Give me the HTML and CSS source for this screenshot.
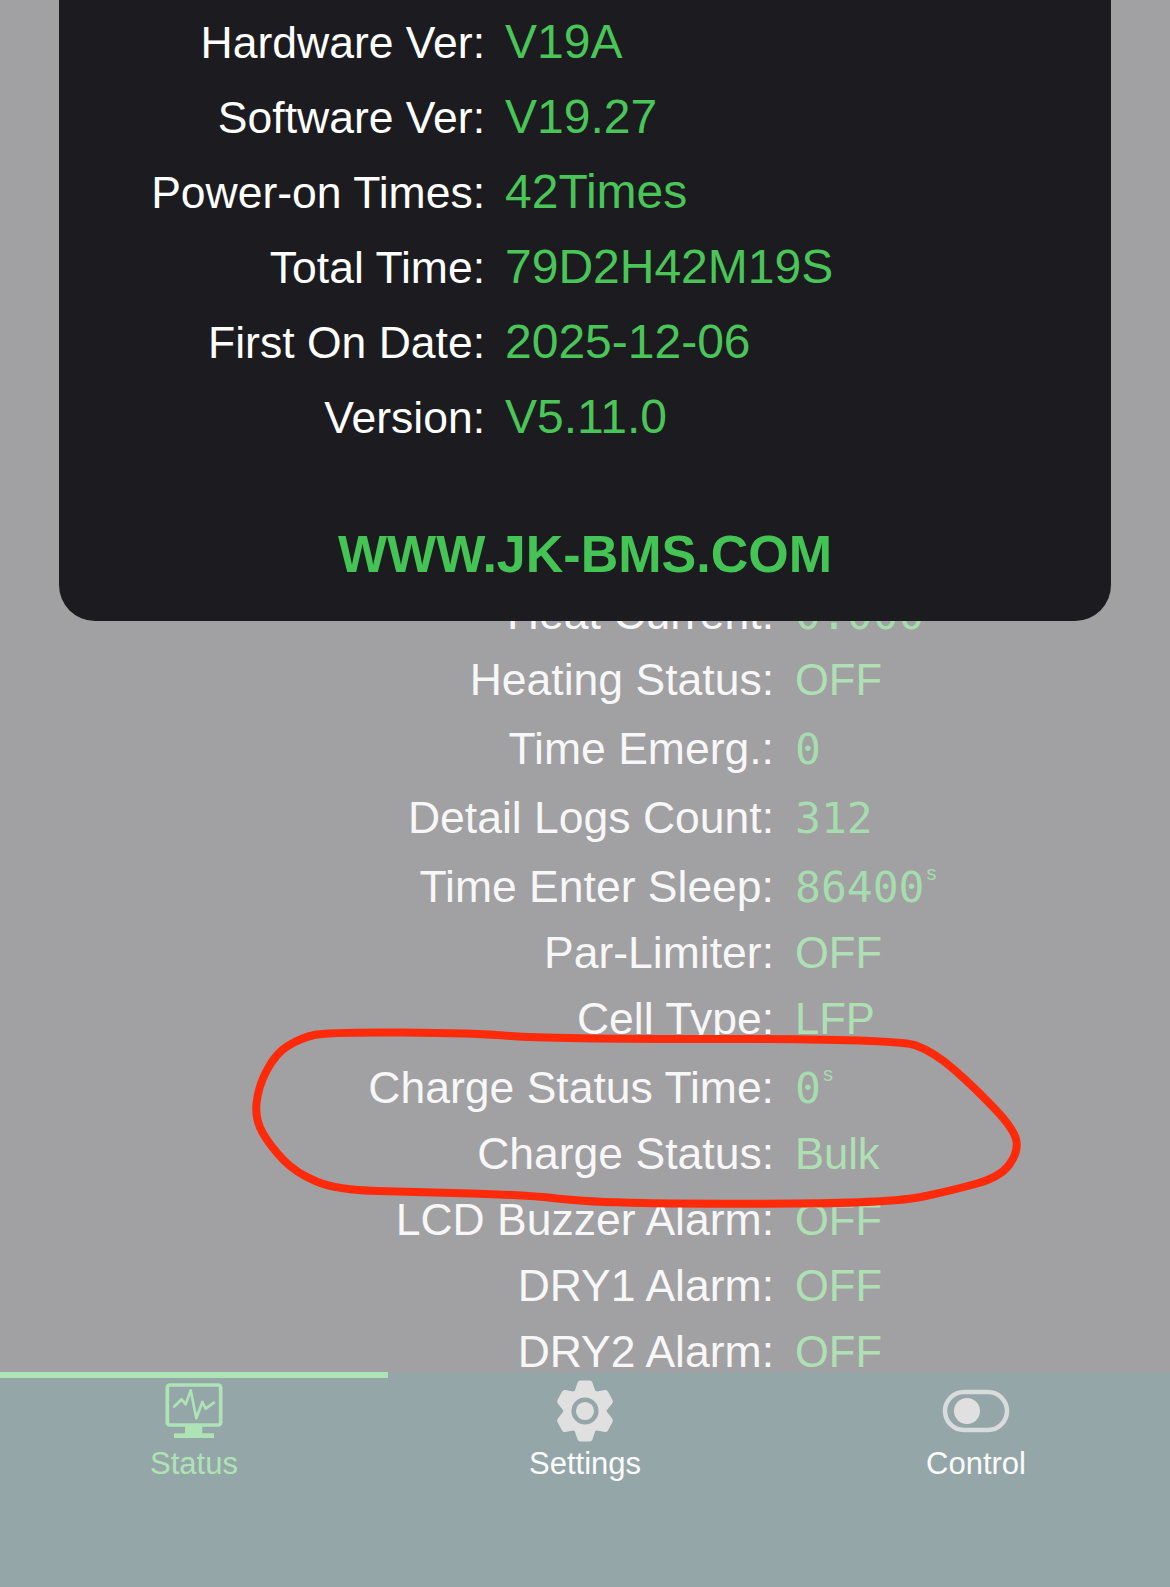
FILE: index.html
```html
<!DOCTYPE html>
<html lang="en">
<head>
<meta charset="utf-8">
<title>JK-BMS Status</title>
<link rel="stylesheet" href="styles.css">
</head>
<body>
<div class="screen">
  <main class="list">
    <div class="row row-mono"><span class="label">Heat Current:</span><span class="value mono">0.000</span></div>
    <div class="row"><span class="label">Heating Status:</span><span class="value">OFF</span></div>
    <div class="row row-mono"><span class="label">Time Emerg.:</span><span class="value mono">0</span></div>
    <div class="row row-mono"><span class="label">Detail Logs Count:</span><span class="value mono">312</span></div>
    <div class="row row-mono"><span class="label">Time Enter Sleep:</span><span class="value mono">86400<sup class="unit">s</sup></span></div>
    <div class="row"><span class="label">Par-Limiter:</span><span class="value">OFF</span></div>
    <div class="row"><span class="label">Cell Type:</span><span class="value">LFP</span></div>
    <div class="row row-mono"><span class="label">Charge Status Time:</span><span class="value mono">0<sup class="unit">s</sup></span></div>
    <div class="row"><span class="label">Charge Status:</span><span class="value">Bulk</span></div>
    <div class="row"><span class="label">LCD Buzzer Alarm:</span><span class="value">OFF</span></div>
    <div class="row"><span class="label">DRY1 Alarm:</span><span class="value">OFF</span></div>
    <div class="row"><span class="label">DRY2 Alarm:</span><span class="value">OFF</span></div>
  </main>

  <nav class="tabs">
    <div class="tab tab-active">
      <div class="tab-icon">
        <svg class="icon-svg" width="60" height="60" viewBox="75 35 180 180">
          <rect class="ic-stroke-green" x="85" y="47" width="160" height="120" rx="7"/>
          <polyline class="ic-pulse" points="105,112 128,90 140,105 155,63 172,147 190,98 200,118 225,100"/>
          <rect class="ic-fill-green" x="138" y="170" width="52" height="26"/>
          <rect class="ic-fill-green" x="105" y="192" width="120" height="14"/>
        </svg>
      </div>
      <span class="tab-label">Status</span>
    </div>
    <div class="tab">
      <div class="tab-icon">
        <svg class="icon-svg" width="60" height="62" viewBox="-30 -31 60 62">
          <polygon class="ic-gear" transform="scale(1 1.05)" points="-4.6,-26.1 4.6,-26.1 7.73,-17.36 11.17,-15.37 20.3,-17.03 24.9,-9.06 18.9,-1.99 18.9,1.99 24.9,9.06 20.3,17.03 11.17,15.37 7.73,17.36 4.6,26.1 -4.6,26.1 -7.73,17.36 -11.17,15.37 -20.3,17.03 -24.9,9.06 -18.9,1.99 -18.9,-1.99 -24.9,-9.06 -20.3,-17.03 -11.17,-15.37 -7.73,-17.36"/>
          <circle class="ic-hole" r="11.3"/>
        </svg>
      </div>
      <span class="tab-label tab-label-light">Settings</span>
    </div>
    <div class="tab">
      <div class="tab-icon">
        <svg class="icon-svg" width="68" height="44" viewBox="0 0 68 44">
          <rect class="ic-stroke-grey" x="3" y="3" width="62" height="38" rx="19"/>
          <circle class="ic-fill-grey" cx="25" cy="22" r="13"/>
        </svg>
      </div>
      <span class="tab-label tab-label-light">Control</span>
    </div>
  </nav>

  <section class="modal">
    <div class="modal-rows">
      <div class="modal-row"><span class="modal-label">Hardware Ver:</span><span class="modal-value">V19A</span></div>
      <div class="modal-row"><span class="modal-label">Software Ver:</span><span class="modal-value">V19.27</span></div>
      <div class="modal-row"><span class="modal-label">Power-on Times:</span><span class="modal-value">42Times</span></div>
      <div class="modal-row"><span class="modal-label">Total Time:</span><span class="modal-value">79D2H42M19S</span></div>
      <div class="modal-row"><span class="modal-label">First On Date:</span><span class="modal-value">2025-12-06</span></div>
      <div class="modal-row"><span class="modal-label">Version:</span><span class="modal-value">V5.11.0</span></div>
    </div>
    <div class="modal-site">WWW.JK-BMS.COM</div>
  </section>

  <svg class="scribble" width="1170" height="1587" viewBox="0 0 1170 1587">
    <path class="scribble-line" d="M401 1032.5 Q475 1033 510.5 1036 Q546 1039 722 1039 Q898 1039 916 1045.5 Q934 1052 954 1069.5 Q974 1087 994.5 1108.5 Q1015 1130 1016.5 1141.5 Q1018 1153 1009 1165 Q1000 1177 977 1183.5 Q954 1190 923.5 1196.5 Q893 1203 796 1203.5 Q699 1204 643 1203 Q587 1202 556.5 1198.5 Q526 1195 472 1193.5 Q418 1192 377.5 1191 Q337 1190 316.5 1181.5 Q296 1173 283.5 1160 Q271 1147 263 1133.5 Q255 1120 256.5 1103.5 Q258 1087 267 1070 Q276 1053 288.5 1045.5 Q301 1038 314 1035 Q327 1032 401 1032.5 Z"/>
  </svg>
</div>
</body>
</html>
```

FILE: styles.css
```css
* {
  box-sizing: border-box;
}

html,
body {
  margin: 0;
  padding: 0;
}

body {
  font-family: "Liberation Sans", Arial, sans-serif;
}

.screen {
  position: relative;
  display: flex;
  flex-direction: column;
  width: 1170px;
  height: 1587px;
  overflow: hidden;
  background: #a1a0a3;
}

/* Background list */
.list {
  flex: none;
  height: 1372px;
  padding-top: 578px;
}

.row {
  display: flex;
  align-items: baseline;
  height: 66px;
  font-size: 44.5px;
  line-height: 66px;
}

.row-mono {
  height: 69px;
  padding-top: 3px;
}

.label {
  flex: none;
  width: 774px;
  margin-right: 21px;
  text-align: right;
  color: #f7f7f7;
  white-space: nowrap;
}

.value {
  font-size: 43.5px;
  color: #aee0b3;
  white-space: nowrap;
}

.mono {
  font-family: "DejaVu Sans Mono", monospace;
  font-size: 43px;
  color: #a6dcae;
}

.unit {
  font-family: "Liberation Sans", Arial, sans-serif;
  font-size: 20px;
  line-height: 0;
  vertical-align: 22px;
  margin-left: 2px;
}

/* Tab bar */
.tabs {
  flex: 1;
  display: grid;
  grid-template-columns: 388px 1fr 388px;
  background: #95a6a9;
}

.tab {
  display: flex;
  flex-direction: column;
  align-items: center;
  padding-top: 2px;
  border-top: 6px solid transparent;
}

.tab-active {
  border-top-color: #aee3b5;
}

.tab-icon {
  display: flex;
  align-items: center;
  justify-content: center;
  height: 62px;
}

.icon-svg {
  display: block;
}

.tab-label {
  margin-top: 5px;
  font-size: 31px;
  line-height: 34px;
  color: #aee3b5;
}

.tab-label-light {
  color: #fbfbfb;
}

.ic-stroke-green {
  fill: none;
  stroke: #aee3b5;
  stroke-width: 11;
}

.ic-pulse {
  fill: none;
  stroke: #aee3b5;
  stroke-width: 8;
  stroke-linecap: round;
  stroke-linejoin: round;
}

.ic-fill-green {
  fill: #aee3b5;
}

.ic-fill-grey {
  fill: #e0e0e1;
}

.ic-gear {
  fill: #e0e0e1;
  stroke: #e0e0e1;
  stroke-width: 6;
  stroke-linejoin: round;
}

.ic-stroke-grey {
  fill: none;
  stroke: #d9dbdc;
  stroke-width: 4.5;
}

.ic-hole {
  fill: #e0e0e1;
  stroke: #95a6a9;
  stroke-width: 4.5;
}

/* Info sheet laid over the list */
.modal {
  position: absolute;
  top: 0;
  left: 59px;
  width: 1052px;
  padding: 3.6px 0 37px;
  background: #1c1c20;
  border-radius: 0 0 36px 36px;
}

.modal-row {
  display: flex;
  align-items: baseline;
  height: 75px;
  font-size: 44.5px;
  line-height: 75px;
}

.modal-label {
  flex: none;
  width: 426px;
  margin-right: 20px;
  text-align: right;
  color: #ffffff;
  white-space: nowrap;
}

.modal-value {
  font-size: 48px;
  color: #4ac558;
  white-space: nowrap;
}

.modal-site {
  margin-top: 70px;
  font-size: 52px;
  font-weight: 700;
  line-height: 60px;
  text-align: center;
  color: #43c454;
}

/* Hand-drawn annotation */
.scribble {
  position: absolute;
  top: 0;
  left: 0;
  pointer-events: none;
}

.scribble-line {
  fill: none;
  stroke: #ff2a0a;
  stroke-width: 8;
  stroke-linejoin: round;
}
```
